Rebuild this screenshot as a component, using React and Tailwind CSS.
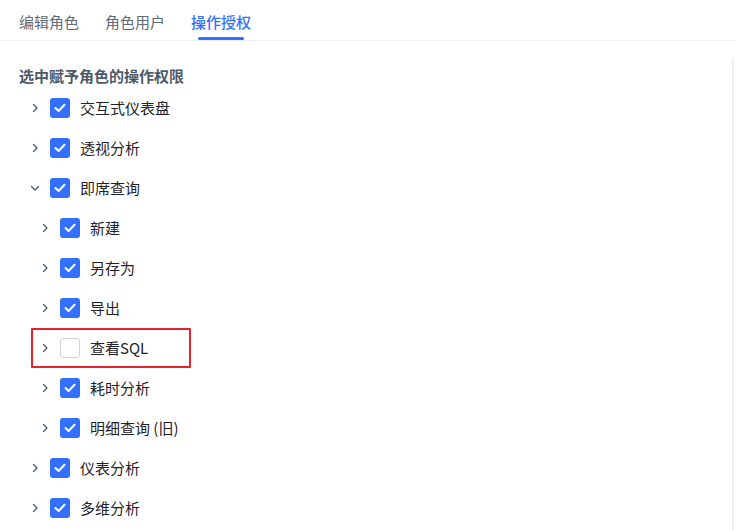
import React from 'react';

const font = { fontFamily: '"Noto Sans CJK SC", "Noto Sans", sans-serif' };

const tabs = ['编辑角色', '角色用户', '操作授权'];

const rows = [
  { label: '交互式仪表盘', level: 0, checked: true },
  { label: '透视分析', level: 0, checked: true },
  { label: '即席查询', level: 0, checked: true, open: true },
  { label: '新建', level: 1, checked: true },
  { label: '另存为', level: 1, checked: true },
  { label: '导出', level: 1, checked: true },
  { label: '查看SQL', level: 1, checked: false, marked: true },
  { label: '耗时分析', level: 1, checked: true },
  { label: '明细查询 (旧)', level: 1, checked: true },
  { label: '仪表分析', level: 0, checked: true },
  { label: '多维分析', level: 0, checked: true },
];

const Chevron = ({ open }) => (
  <svg width="12" height="12" viewBox="0 0 12 12" className="text-[#4e5969]">
    {open ? (
      <path d="M2.5 4.5 L6 8 L9.5 4.5" fill="none" stroke="currentColor" strokeWidth="1.3" strokeLinecap="round" strokeLinejoin="round" />
    ) : (
      <path d="M4.5 2.5 L8 6 L4.5 9.5" fill="none" stroke="currentColor" strokeWidth="1.3" strokeLinecap="round" strokeLinejoin="round" />
    )}
  </svg>
);

const Checkbox = ({ checked }) =>
  checked ? (
    <div className="w-5 h-5 rounded-[3px] bg-[#3370ff] flex items-center justify-center">
      <svg width="12" height="10" viewBox="0 0 12 10">
        <path d="M1.5 5 L4.6 8 L10.5 1.8" fill="none" stroke="white" strokeWidth="2" strokeLinecap="round" strokeLinejoin="round" />
      </svg>
    </div>
  ) : (
    <div className="w-5 h-5 rounded-[3px] border border-[#d0d3d9] bg-white" />
  );

const Row = ({ row }) => (
  <div className={`relative flex items-center h-10 ${row.level === 1 ? 'pl-[20px]' : 'pl-[10px]'}`}>
    <div className="w-[12px] flex items-center justify-center">
      <Chevron open={row.open} />
    </div>
    <div className="ml-[9px]">
      <Checkbox checked={row.checked} />
    </div>
    <span className="ml-[10px] text-[15px] leading-5 text-[#1f2329]">{row.label}</span>
    {row.marked && (
      <div className="absolute left-[12px] top-0 w-[160px] h-10 border-2 border-[#e8232d] rounded-[1px]" />
    )}
  </div>
);

export default function App() {
  return (
    <div className="w-[736px] h-[530px] bg-white overflow-hidden" style={font}>
      <div className="flex gap-[26px] pl-[19px] h-[41px] border-b border-[#eceef2]">
        {tabs.map((t, i) => (
          <div
            key={t}
            className={`relative h-10 pt-[12px] text-[15px] leading-5 ${
              i === 2 ? 'text-[#3370ff] font-medium' : 'text-[#646a73]'
            }`}
          >
            {t}
            {i === 2 && (
              <div className="absolute left-[7px] right-[7px] bottom-0 h-[3px] rounded-full bg-[#3370ff]" />
            )}
          </div>
        ))}
      </div>
      <div className="mt-[17px] w-[734px] h-[472px] border-r-2 border-[#eef0f4] pt-[8px] pl-[19px]">
        <div className="text-[15px] leading-5 font-bold text-[#4e5969]">选中赋予角色的操作权限</div>
        <div className="mt-[2px]">
          {rows.map((r) => (
            <Row key={r.label} row={r} />
          ))}
        </div>
      </div>
    </div>
  );
}
